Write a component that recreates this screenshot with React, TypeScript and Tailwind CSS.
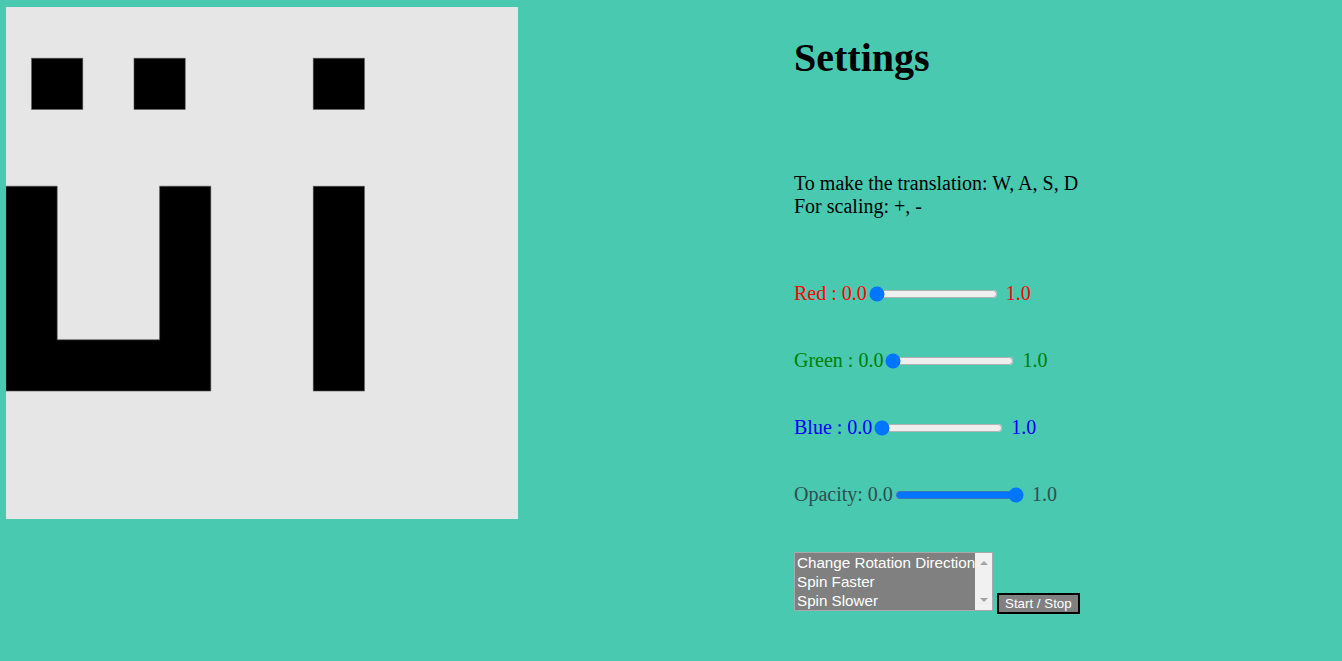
import React from "react";

const Canvas = () => {
  // 512x512 drawing area, 10x10 grid of 51.2px cells
  const c = 51.2;
  const squares: [number, number][] = [
    [0.5, 1],
    [2.5, 1],
    [6, 1],
  ];
  const u = `M0 ${3.5 * c} H${c} V${6.5 * c} H${3 * c} V${3.5 * c} H${4 * c} V${7.5 * c} H0 Z`;
  return (
    <svg width={512} height={512} viewBox="0 0 512 512" className="block bg-[#e6e6e6]">
      {squares.map(([x, y], i) => (
        <rect key={i} x={x * c} y={y * c} width={c} height={c} fill="#000" stroke="#555" strokeWidth={0.6} />
      ))}
      <path d={u} fill="#000" stroke="#555" strokeWidth={0.6} />
      <rect x={6 * c} y={3.5 * c} width={c} height={4 * c} fill="#000" stroke="#555" strokeWidth={0.6} />
    </svg>
  );
};

const SliderRow = ({
  label,
  color,
  value,
}: {
  label: string;
  color: string;
  value: number;
}) => (
  <div className={`flex items-center h-[23px] ${color}`}>
    <span>{label}</span>
    <input
      type="range"
      min={0}
      max={1}
      step={0.1}
      defaultValue={value}
      className="w-[129px] h-[16px] mx-[2px]"
    />
    <span className="ml-[6px]">1.0</span>
  </div>
);

const options = ["Change Rotation Direction", "Spin Faster", "Spin Slower"];

const App = () => {
  return (
    <main className="min-h-screen bg-[#48c9b0] flex items-start font-['Liberation_Serif',serif] text-black">
      <div className="ml-[6px] mt-[7px]">
        <Canvas />
      </div>
      <div className="ml-[276px] flex flex-col">
        <h1 className="mt-[35px] text-[40px] leading-[46px] font-bold">Settings</h1>
        <div className="mt-[91px] text-[20px] leading-[23px]">
          <p>To make the translation: W, A, S, D</p>
          <p>For scaling: +, -</p>
        </div>
        <div className="mt-[64px] flex flex-col gap-[44px] text-[20px] leading-[23px]">
          <SliderRow label="Red : 0.0" color="text-[#ff0000]" value={0} />
          <SliderRow label="Green : 0.0" color="text-[#008000]" value={0} />
          <SliderRow label="Blue : 0.0" color="text-[#0000ff]" value={0} />
          <SliderRow label="Opacity: 0.0" color="text-[#2f4f4f]" value={1} />
        </div>
        <div className="mt-[46px] flex items-start gap-[4px] font-['Liberation_Sans',Arial,sans-serif]">
          <div role="listbox" className="flex w-[199px] h-[59px] border border-[#a9a9a9]">
            <ul className="flex-1 bg-[#808080] text-white text-[15.2px] leading-[19px] overflow-hidden">
              {options.map((o) => (
                <li key={o} className="pl-[2px] whitespace-nowrap">
                  {o}
                </li>
              ))}
            </ul>
            <div className="w-[17px] bg-[#f1f1f1] flex flex-col items-center justify-between py-[8px]">
              <span className="w-0 h-0 border-x-[4px] border-x-transparent border-b-[4px] border-b-[#a3a3a3]" />
              <span className="w-0 h-0 border-x-[4px] border-x-transparent border-t-[4px] border-t-[#a3a3a3]" />
            </div>
          </div>
          <button className="mt-[41px] h-[21px] px-[6px] bg-[#808080] text-white text-[13.33px] leading-[15px] border-2 border-black">
            Start / Stop
          </button>
        </div>
      </div>
    </main>
  );
};

export default App;
